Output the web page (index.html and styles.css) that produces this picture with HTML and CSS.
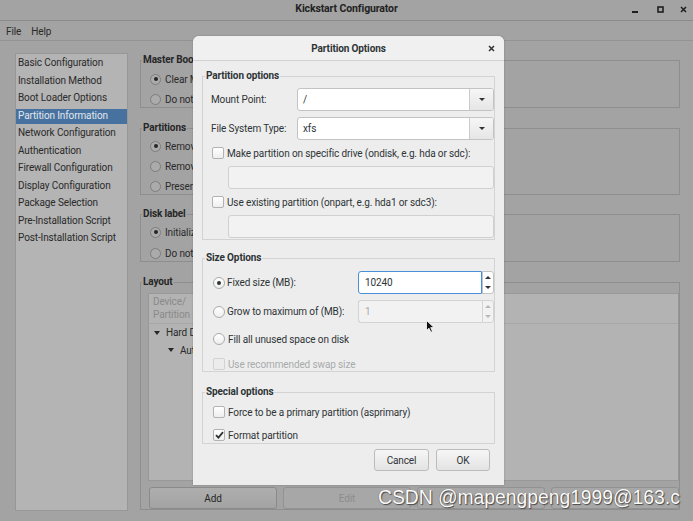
FILE: index.html
```html
<!DOCTYPE html>
<html lang="en">
<head>
<meta charset="utf-8">
<title>Kickstart Configurator</title>
<link rel="stylesheet" href="styles.css">
</head>
<body>
<div class="window">
  <header class="titlebar">
    <span class="title">Kickstart Configurator</span>
    <div class="wm">
      <svg class="wm-min" width="6" height="7" viewBox="0 0 6 7"><rect x="0" y="5" width="6" height="2" fill="#1e1e1e"/></svg>
      <svg class="wm-max" width="7" height="7" viewBox="0 0 7 7"><rect x="1" y="1" width="5" height="5" fill="none" stroke="#1e1e1e" stroke-width="1.6"/></svg>
      <svg class="wm-close" width="7" height="7" viewBox="0 0 7 7"><path d="M1 1L6 6M6 1L1 6" stroke="#1e1e1e" stroke-width="1.5"/></svg>
    </div>
  </header>
  <nav class="menubar"><span>File</span><span>Help</span></nav>
  <div class="main">
    <ul class="sidebar">
      <li>Basic Configuration</li>
      <li>Installation Method</li>
      <li>Boot Loader Options</li>
      <li class="sel">Partition Information</li>
      <li>Network Configuration</li>
      <li>Authentication</li>
      <li>Firewall Configuration</li>
      <li>Display Configuration</li>
      <li>Package Selection</li>
      <li>Pre-Installation Script</li>
      <li>Post-Installation Script</li>
    </ul>
    <div class="content">
      <fieldset class="frame f-mbr">
        <legend>Master Boot Record</legend>
        <div class="opt m5"><span class="radio on"></span>Clear Master Boot Record</div>
        <div class="opt m6"><span class="radio"></span>Do not clear Master Boot Record</div>
      </fieldset>
      <fieldset class="frame f-part">
        <legend>Partitions</legend>
        <div class="opt m4"><span class="radio on"></span>Remove all existing partitions</div>
        <div class="opt m6"><span class="radio"></span>Remove existing Linux partitions</div>
        <div class="opt m6"><span class="radio"></span>Preserve existing partitions</div>
      </fieldset>
      <fieldset class="frame f-disk">
        <legend>Disk label</legend>
        <div class="opt m4"><span class="radio on"></span>Initialize the disk label</div>
        <div class="opt m7"><span class="radio"></span>Do not initialize the disk label</div>
      </fieldset>
      <fieldset class="frame f-layout">
        <legend>Layout</legend>
        <div class="tree">
          <div class="tree-head">
            <div class="th">Device/<br>Partition Number</div>
            <div class="th">Mount Point/<br>RAID/Volume</div>
            <div class="th">Type</div>
            <div class="th">Format</div>
            <div class="th">Size (MB)</div>
          </div>
          <div class="tree-row lvl1"><span class="exp"></span>Hard Drives</div>
          <div class="tree-row lvl2"><span class="exp"></span>Auto</div>
        </div>
        <div class="btn-row">
          <button class="btn">Add</button>
          <button class="btn off">Edit</button>
          <button class="btn off">Delete</button>
          <button class="btn off">RAID</button>
        </div>
      </fieldset>
    </div>
  </div>
</div>

<div class="dialog">
  <div class="dlg-title">
    <span class="dlg-name">Partition Options</span>
    <svg class="dlg-close" width="7" height="7" viewBox="0 0 7 7"><path d="M1 1L6 6M6 1L1 6" stroke="#2e3436" stroke-width="1.5"/></svg>
  </div>
  <div class="dlg-body">
    <fieldset class="dframe d1">
      <legend>Partition options</legend>
      <div class="drow m5"><span class="dlabel w86">Mount Point:</span><div class="combo"><span class="combo-val">/</span><span class="combo-btn"><span class="tri"></span></span></div></div>
      <div class="drow m6"><span class="dlabel w86">File System Type:</span><div class="combo"><span class="combo-val">xfs</span><span class="combo-btn"><span class="tri"></span></span></div></div>
      <div class="dcheck m6"><span class="check"></span>Make partition on specific drive (ondisk, e.g. hda or sdc):</div>
      <div class="entry off m6"></div>
      <div class="dcheck m6"><span class="check"></span>Use existing partition (onpart, e.g. hda1 or sdc3):</div>
      <div class="entry off m6"></div>
    </fieldset>
    <fieldset class="dframe d2">
      <legend>Size Options</legend>
      <div class="drow m6"><span class="dlabel w147"><span class="dradio on"></span>Fixed size (MB):</span>
        <div class="spin focus"><span class="spin-entry">10240</span><span class="spin-btns"><span class="up"></span><span class="down"></span></span></div></div>
      <div class="drow m6"><span class="dlabel w147"><span class="dradio"></span>Grow to maximum of (MB):</span>
        <div class="spin off"><span class="spin-entry">1</span><span class="spin-btns"><span class="up"></span><span class="down"></span></span></div></div>
      <div class="dopt m9"><span class="dradio"></span>Fill all unused space on disk</div>
      <div class="dopt m11 disabled"><span class="check dis"></span>Use recommended swap size</div>
    </fieldset>
    <fieldset class="dframe d3">
      <legend>Special options</legend>
      <div class="dopt m6"><span class="check"></span>Force to be a primary partition (asprimary)</div>
      <div class="dopt m9"><span class="check on"><svg width="9" height="8" viewBox="0 0 9 8"><path d="M1 4.2L3.4 6.6L8 1.2" fill="none" stroke="#2e3436" stroke-width="1.8"/></svg></span>Format partition</div>
    </fieldset>
    <div class="dlg-actions">
      <button class="dbtn cancel">Cancel</button>
      <button class="dbtn ok">OK</button>
    </div>
  </div>
</div>

<svg class="cursor" width="9" height="13" viewBox="0 0 9 13"><path d="M0.5 0.5L0.5 10.5L3 8.2L4.9 12.2L6.5 11.5L4.7 7.6L8 7.6Z" fill="#111" stroke="#fff" stroke-width="0.8"/></svg>

<div class="watermark">CSDN @mapengpeng1999@163.c</div>
</body>
</html>
```
FILE: styles.css
```css
* { box-sizing: border-box; }
html, body { margin: 0; padding: 0; }
body {
  width: 693px;
  height: 521px;
  overflow: hidden;
  position: relative;
  background: #a3a3a3;
  font-family: Roboto, "Liberation Sans", sans-serif;
  font-size: 10px;
  letter-spacing: -0.12px;
  color: #2a2a2a;
}
.window { width: 693px; height: 521px; }

.titlebar {
  height: 21px;
  border-bottom: 1px solid #8b8b8b;
  display: grid;
  grid-template-columns: 1fr auto 1fr;
  align-items: center;
  padding-bottom: 3px;
}
.title { grid-column: 2; font-weight: bold; font-size: 10.5px; color: #222; }
.wm { grid-column: 3; justify-self: end; display: flex; align-items: center; padding-right: 6px; padding-top: 1px; }
.wm-min { margin-right: 19px; }
.wm-max { margin-right: 16px; }

.menubar {
  height: 20px;
  border-bottom: 1px solid #939393;
  display: flex;
  align-items: center;
  gap: 10px;
  padding-left: 6px;
  padding-top: 1px;
}

.main {
  display: flex;
  gap: 12px;
  padding: 12px 13px 0 15px;
}

.sidebar {
  list-style: none;
  margin: 0;
  padding: 0;
  width: 113px;
  height: 458px;
  background: #b4b4b4;
  border: 1px solid #979797;
  flex: none;
}
.sidebar li {
  height: 17.5px;
  line-height: 17.5px;
  padding-left: 2px;
  white-space: nowrap;
}
.sidebar li.sel {
  background: linear-gradient(transparent 2px, #47729f 2px);
  color: #e2e7ee;
}

.content { width: 540px; display: flex; flex-direction: column; }

.frame {
  margin: 0;
  padding: 0 0 1px 1px;
  border: 1px solid #8e8e8e;
  min-width: 0;
}
.frame legend {
  font-weight: bold;
  padding: 0 1px;
  line-height: 14px;
  color: #262626;
}
.f-part { margin-top: 13px; }
.f-disk { margin-top: 12px; }
.f-layout { margin-top: 13px; padding-bottom: 0; }

.opt {
  display: flex;
  align-items: center;
  gap: 4px;
  height: 14px;
  padding-left: 8px;
  white-space: nowrap;
}
.m4 { margin-top: 4px; }
.m5 { margin-top: 5px; }
.m6 { margin-top: 6px; }
.m7 { margin-top: 7px; }
.m9 { margin-top: 9px; }
.m11 { margin-top: 11px; }

.radio {
  width: 11px;
  height: 11px;
  border-radius: 50%;
  border: 1px solid #7d7d7d;
  background: #ababab;
  display: flex;
  align-items: center;
  justify-content: center;
  flex: none;
}
.radio.on::after {
  content: "";
  width: 4px;
  height: 4px;
  border-radius: 50%;
  background: #262626;
}

.tree {
  margin: 4px 0 0 6px;
  height: 188px;
  background: #b3b3b3;
  border: 1px solid #989898;
  overflow: hidden;
}
.tree-head {
  height: 30px;
  border-bottom: 1px solid #a7a7a7;
  display: flex;
  color: #8a8a8a;
}
.th { padding: 1px 4px 0 4px; line-height: 13px; white-space: nowrap; }
.tree-row {
  height: 17.5px;
  display: flex;
  align-items: center;
  white-space: nowrap;
}
.lvl1 { padding-left: 5px; }
.lvl2 { padding-left: 19px; }
.exp {
  width: 0;
  height: 0;
  border-left: 3px solid transparent;
  border-right: 3px solid transparent;
  border-top: 4px solid #262626;
  margin-right: 6px;
}

.btn-row {
  display: flex;
  gap: 6px;
  margin: 6px 0 0 7px;
}
.btn {
  flex: 1;
  height: 22px;
  border: 1px solid #8a8a8a;
  border-radius: 3px;
  background: linear-gradient(#aeaeae, #a3a3a3);
  font: inherit;
  letter-spacing: inherit;
  color: #262626;
  padding: 0;
}
.btn.off { color: #8c8c8c; background: #a7a7a7; border-color: #929292; }

/* dialog */
.dialog {
  position: absolute;
  left: 193px;
  top: 36px;
  width: 311px;
  height: 449px;
  background: #ededed;
  border-radius: 6px 6px 0 0;
  box-shadow: 0 0 2px rgba(0,0,0,0.25);
  color: #2e3436;
}
.dlg-title {
  height: 25px;
  border-bottom: 1px solid #d2d2d2;
  display: grid;
  grid-template-columns: 1fr auto 1fr;
  align-items: center;
  background: #f0f0f0;
  border-radius: 6px 6px 0 0;
}
.dlg-name { grid-column: 2; font-weight: bold; }
.dlg-close { grid-column: 3; justify-self: end; margin-right: 9px; }
.dlg-body { padding: 8px 9px 0 9px; }

.dframe {
  margin: 0;
  padding: 0 0 1px 8px;
  border: 1px solid #d3d3d3;
  min-width: 0;
}
.dframe legend {
  font-weight: bold;
  line-height: 14px;
  padding: 0 1px;
  margin-left: -6px;
}
.d2 { margin-top: 11px; padding-bottom: 0; }
.d3 { margin-top: 13px; }

.drow { display: flex; align-items: center; height: 23px; }
.dlabel { display: flex; align-items: center; gap: 2px; white-space: nowrap; flex: none; }
.w86 { width: 86px; }
.w147 { width: 147px; padding-left: 2px; }

.combo {
  flex: 1;
  height: 23px;
  display: flex;
  background: #fff;
  border: 1px solid #c3c3c3;
  border-radius: 3px;
}
.combo-val { flex: 1; padding-left: 5px; line-height: 21px; }
.combo-btn {
  width: 24px;
  border-left: 1px solid #cbcbcb;
  background: linear-gradient(#f6f6f6, #e6e6e6);
  border-radius: 0 2px 2px 0;
  display: flex;
  align-items: center;
  justify-content: center;
}
.tri {
  width: 0;
  height: 0;
  border-left: 3px solid transparent;
  border-right: 3px solid transparent;
  border-top: 3px solid #2e3436;
}

.dcheck, .dopt {
  display: flex;
  align-items: center;
  height: 14px;
  white-space: nowrap;
  gap: 3px;
}
.dcheck { padding-left: 1px; }
.dopt { padding-left: 2px; }
.disabled { color: #a8abab; }

.check {
  width: 12px;
  height: 12px;
  border: 1px solid #b2b2b2;
  border-radius: 2px;
  background: linear-gradient(#ffffff, #eeeeee);
  flex: none;
  display: flex;
  align-items: center;
  justify-content: center;
}
.check.dis { border-color: #d2d2d2; background: #ececec; }

.dradio {
  width: 12px;
  height: 12px;
  border-radius: 50%;
  border: 1px solid #aaaaaa;
  background: linear-gradient(#ffffff, #eeeeee);
  flex: none;
  display: flex;
  align-items: center;
  justify-content: center;
}
.dradio.on::after {
  content: "";
  width: 4px;
  height: 4px;
  border-radius: 50%;
  background: #2e3436;
}

.entry {
  height: 23px;
  margin-left: 17px;
  border: 1px solid #d0d0d0;
  border-radius: 3px;
  background: #f2f2f2;
}

.spin { flex: 1; height: 23px; display: flex; }
.spin-entry {
  flex: 1;
  background: #fff;
  border: 1px solid #c3c3c3;
  border-right: none;
  border-radius: 3px 0 0 3px;
  padding-left: 6px;
  line-height: 21px;
}
.spin.focus .spin-entry { border: 1px solid #4a90d9; }
.spin-btns {
  width: 12px;
  display: flex;
  flex-direction: column;
  border: 1px solid #c3c3c3;
  border-radius: 0 3px 3px 0;
  background: #fff;
}
.spin-btns span { flex: 1; display: flex; align-items: center; justify-content: center; }
.spin-btns .up::after {
  content: "";
  border-left: 3px solid transparent;
  border-right: 3px solid transparent;
  border-bottom: 3px solid #2e3436;
}
.spin-btns .down::after {
  content: "";
  border-left: 3px solid transparent;
  border-right: 3px solid transparent;
  border-top: 3px solid #2e3436;
}
.spin.off .spin-entry { background: #f2f2f2; border-color: #d3d3d3; color: #a8abab; }
.spin.off .spin-btns { background: #f2f2f2; border-color: #d3d3d3; }
.spin.off .up::after { border-bottom-color: #b8b8b8; }
.spin.off .down::after { border-top-color: #b8b8b8; }

.dlg-actions {
  display: flex;
  justify-content: flex-end;
  gap: 7px;
  margin-top: 5px;
  padding-right: 5px;
}
.dbtn {
  height: 22px;
  border: 1px solid #bcbcbc;
  border-radius: 3px;
  background: linear-gradient(#f6f6f6, #e3e3e3);
  font: inherit;
  letter-spacing: inherit;
  color: #2e3436;
  padding: 0;
}
.cancel { width: 55px; }
.ok { width: 54px; }

.cursor { position: absolute; left: 426px; top: 320px; }

.watermark {
  position: absolute;
  left: 378px;
  top: 487px;
  font-family: "Liberation Sans", Arial, sans-serif;
  font-size: 19.3px;
  letter-spacing: 0;
  color: #fafafa;
  text-shadow: 1px 1px 1px #4a4a4a, -0.5px -0.5px 0.5px #6a6a6a;
  white-space: nowrap;
}
```
